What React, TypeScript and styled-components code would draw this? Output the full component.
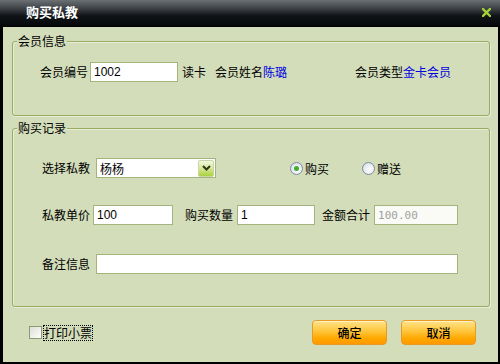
import React from "react";
import styled, { createGlobalStyle } from "styled-components";

const Global = createGlobalStyle`
  html, body { margin: 0; padding: 0; background: #000; }
  body { font-family: "Noto Sans CJK SC", "Liberation Sans", sans-serif; font-size: 12px; color: #000; }
  * { box-sizing: border-box; }
`;

const Window = styled.div`
  width: 500px;
  height: 364px;
  display: flex;
  flex-direction: column;
  background: #000;
`;

const TitleBar = styled.div`
  height: 27px;
  flex: none;
  display: flex;
  align-items: center;
  justify-content: space-between;
  padding: 0 9px 2px 26px;
  background: linear-gradient(#6b7075 0%, #3a3e43 35%, #111418 60%, #050709 100%);
  border-bottom: 1px solid #000;
`;

const Title = styled.div`
  color: #fff;
  font-size: 13px;
  font-weight: bold;
  line-height: 16px;
`;

const CloseBtn = styled.svg`
  width: 9px;
  height: 9px;
  display: block;
  margin-top: 1px;
`;

const Body = styled.div`
  flex: 1;
  margin: 0 2px 2px 3px;
  background: #d3ddba;
  display: flex;
  flex-direction: column;
  padding: 14px 0 0 9px;
`;

const Group = styled.div<{ $h: number; $mt?: number }>`
  position: relative;
  width: 478px;
  height: ${(p) => p.$h}px;
  margin-top: ${(p) => p.$mt ?? 0}px;
  border: 1px solid #9aab62;
  border-radius: 3px;
  box-shadow: inset 1px 1px 0 #e6ecd6, 1px 1px 0 #e6ecd6;
  display: flex;
  flex-direction: column;
`;

const Legend = styled.div`
  position: absolute;
  top: -9px;
  left: 4px;
  padding: 0 1px;
  background: #d3ddba;
  line-height: 16px;
  font-size: 12px;
`;

const Row = styled.div<{ $mt: number; $pl: number }>`
  display: flex;
  align-items: center;
  height: 20px;
  margin-top: ${(p) => p.$mt}px;
  padding-left: ${(p) => p.$pl}px;
`;

const Label = styled.span<{ $ml?: number; $mr?: number; $blue?: boolean }>`
  margin-left: ${(p) => p.$ml ?? 0}px;
  margin-right: ${(p) => p.$mr ?? 0}px;
  color: ${(p) => (p.$blue ? "#0000e0" : "#000")};
  line-height: 16px;
  white-space: nowrap;
`;

const Input = styled.div<{ $w: number; $h?: number; $disabled?: boolean }>`
  width: ${(p) => p.$w}px;
  height: ${(p) => p.$h ?? 20}px;
  border: 1px solid #a3b47c;
  background: ${(p) => (p.$disabled ? "#fafbf6" : "#fff")};
  color: ${(p) => (p.$disabled ? "#a0a0a0" : "#000")};
  display: flex;
  align-items: center;
  padding-left: 3px;
  font-family: ${(p) => (p.$disabled ? '"DejaVu Sans Mono", monospace' : '"Liberation Sans", sans-serif')};
  font-size: ${(p) => (p.$disabled ? 11 : 12)}px;
`;

const Select = styled.div`
  width: 120px;
  height: 20px;
  border: 1px solid #a3b47c;
  background: #fff;
  display: flex;
  align-items: center;
  justify-content: space-between;
  padding: 0 1px 0 3px;
`;

const DropBtn = styled.div`
  width: 16px;
  height: 17px;
  border: 1px solid #c9d6a6;
  border-radius: 2px;
  background: linear-gradient(#f2f7e2 0%, #d6e79a 50%, #a9d23a 100%);
  display: flex;
  align-items: center;
  justify-content: center;
`;

const Radio = styled.span<{ $ml: number }>`
  display: inline-flex;
  align-items: center;
  margin-left: ${(p) => p.$ml}px;
  gap: 2px;
`;

const RadioCircle = styled.span<{ $checked?: boolean }>`
  width: 13px;
  height: 13px;
  border-radius: 50%;
  border: 1px solid #7d8da3;
  background: radial-gradient(circle at 60% 60%, #ffffff 0%, #e4e8ee 60%, #c9d0da 100%);
  display: flex;
  align-items: center;
  justify-content: center;
  &::after {
    content: "";
    display: ${(p) => (p.$checked ? "block" : "none")};
    width: 5px;
    height: 5px;
    border-radius: 50%;
    background: #3fae2a;
  }
`;

const Footer = styled.div`
  display: flex;
  align-items: center;
  margin-top: 12px;
  padding-left: 17px;
  height: 27px;
`;

const Check = styled.span`
  display: inline-flex;
  align-items: center;
  gap: 2px;
`;

const CheckBox = styled.span`
  width: 13px;
  height: 13px;
  border: 1px solid #8c9a78;
  background: linear-gradient(135deg, #dcdfd6 0%, #f4f5f0 70%, #ffffff 100%);
`;

const FocusText = styled.span`
  outline: 1px dotted #000;
  line-height: 14px;
`;

const Buttons = styled.div`
  margin-left: auto;
  margin-right: 22px;
  display: flex;
  gap: 14px;
`;

const Button = styled.div`
  width: 75px;
  height: 25px;
  border: 1px solid #e89a22;
  border-radius: 4px;
  background: linear-gradient(#ffe38a 0%, #ffc53a 45%, #ffa800 75%, #ff9a00 100%);
  display: flex;
  align-items: center;
  justify-content: center;
  font-size: 12px;
  font-weight: 500;
  box-shadow: inset 0 1px 0 #fff3c4;
`;

export default function App() {
  return (
    <>
      <Global />
      <Window>
        <TitleBar>
          <Title>购买私教</Title>
          <CloseBtn viewBox="0 0 9 9">
            <path d="M1 1 L8 8 M8 1 L1 8" stroke="#a4d13a" strokeWidth="2.4" strokeLinecap="square" />
          </CloseBtn>
        </TitleBar>
        <Body>
          <Group $h={75}>
            <Legend>会员信息</Legend>
            <Row $mt={20} $pl={27}>
              <Label $mr={2}>会员编号</Label>
              <Input $w={88}>1002</Input>
              <Label $ml={4}>读卡</Label>
              <Label $ml={9}>会员姓名</Label>
              <Label $blue>陈璐</Label>
              <Label $ml={68}>会员类型</Label>
              <Label $blue>金卡会员</Label>
            </Row>
          </Group>
          <Group $h={179} $mt={12}>
            <Legend>购买记录</Legend>
            <Row $mt={29} $pl={29}>
              <Label $mr={6}>选择私教</Label>
              <Select>
                <span>杨杨</span>
                <DropBtn>
                  <svg width="9" height="6" viewBox="0 0 9 6">
                    <path d="M1 1 L4.5 4.5 L8 1" stroke="#2b3a10" strokeWidth="2" fill="none" />
                  </svg>
                </DropBtn>
              </Select>
              <Radio $ml={74}>
                <RadioCircle $checked />
                <span>购买</span>
              </Radio>
              <Radio $ml={33}>
                <RadioCircle />
                <span>赠送</span>
              </Radio>
            </Row>
            <Row $mt={27} $pl={29}>
              <Label $mr={3}>私教单价</Label>
              <Input $w={80}>100</Input>
              <Label $ml={12} $mr={4}>购买数量</Label>
              <Input $w={78}>1</Input>
              <Label $ml={7} $mr={4}>金额合计</Label>
              <Input $w={84} $disabled>100.00</Input>
            </Row>
            <Row $mt={29} $pl={29}>
              <Label $mr={6}>备注信息</Label>
              <Input $w={362} />
            </Row>
          </Group>
          <Footer>
            <Check>
              <CheckBox />
              <FocusText>打印小票</FocusText>
            </Check>
            <Buttons>
              <Button>确定</Button>
              <Button>取消</Button>
            </Buttons>
          </Footer>
        </Body>
      </Window>
    </>
  );
}
